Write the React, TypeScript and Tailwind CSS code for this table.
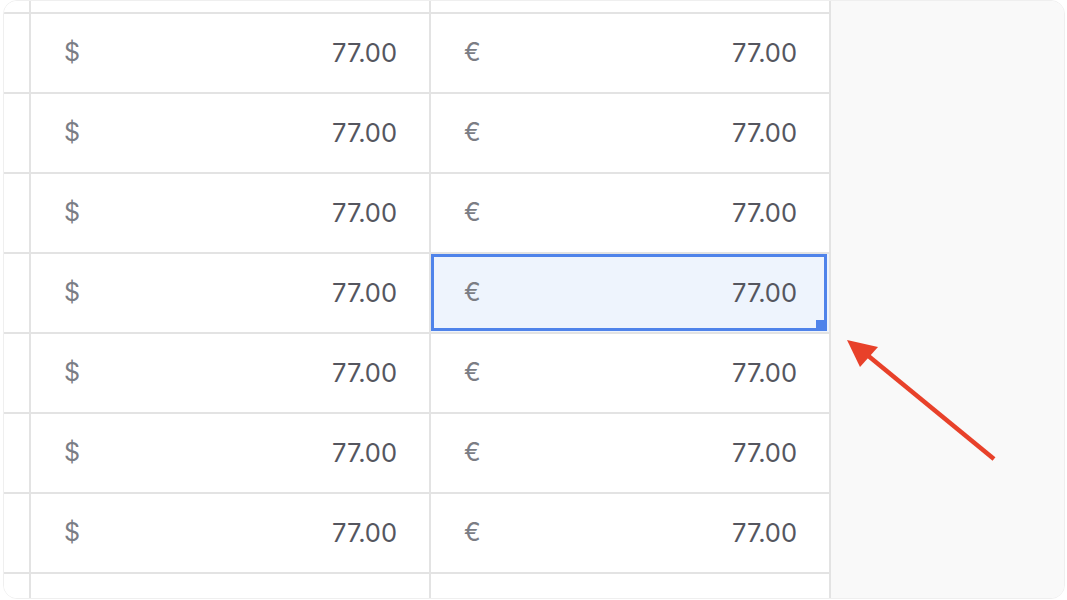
const ROWS = 7;

function Cell({
  symbol,
  selected = false,
}: {
  symbol: string;
  selected?: boolean;
}) {
  return (
    <div
      className={
        "relative flex w-[400px] shrink-0 items-center justify-between border-r-2 border-[#e3e3e3] pr-[32px] pl-[33px] " +
        (selected ? "bg-[#eef4fd]" : "bg-white")
      }
    >
      <span className="text-[25px] text-[#7b7d85]">{symbol}</span>
      <span className="text-[25.5px] text-[#55565f]">77.00</span>
      {selected && (
        <div className="pointer-events-none absolute top-0 right-[2px] bottom-[1px] left-0 border-[3px] border-[#4f83ea]">
          <div className="absolute right-0 bottom-0 h-[8px] w-[8px] bg-[#4f83ea]" />
        </div>
      )}
    </div>
  );
}

function Spacer() {
  return (
    <>
      <div className="w-[27px] shrink-0 border-r-2 border-[#e3e3e3]" />
      <div className="w-[400px] shrink-0 border-r-2 border-[#e3e3e3]" />
      <div className="w-[400px] shrink-0 border-r-2 border-[#e3e3e3]" />
    </>
  );
}

function Row({ selected = false }: { selected?: boolean }) {
  return (
    <div className="flex h-[80px] border-t-2 border-[#e3e3e3]">
      <div className="w-[27px] shrink-0 border-r-2 border-[#e3e3e3]" />
      <Cell symbol="$" />
      <Cell symbol="€" selected={selected} />
    </div>
  );
}

export default function App() {
  return (
    <div
      className="h-[600px] w-[1067px] bg-white pt-0 pr-[2px] pb-[1px] pl-[3px]"
      style={{ fontFamily: "Inter, 'Noto Sans', sans-serif" }}
    >
      <div className="relative flex h-full overflow-hidden rounded-[14px] border border-[#efefef]">
        <div className="flex w-[827px] shrink-0 flex-col bg-white">
          <div className="flex h-[11px]">
            <Spacer />
          </div>
          {Array.from({ length: ROWS }).map((_, i) => (
            <Row key={i} selected={i === 3} />
          ))}
          <div className="flex flex-1 border-t-2 border-[#e3e3e3]">
            <Spacer />
          </div>
        </div>
        <div className="flex-1 bg-[#f9f9f9]" />
        <svg
          className="absolute top-[-1px] left-[-4px]"
          width="1067"
          height="600"
          viewBox="0 0 1067 600"
        >
          <line
            x1="994"
            y1="459"
            x2="866"
            y2="354"
            stroke="#e8412a"
            strokeWidth="4.5"
          />
          <polygon points="847,340 878,347 860,367" fill="#e8412a" />
        </svg>
      </div>
    </div>
  );
}
